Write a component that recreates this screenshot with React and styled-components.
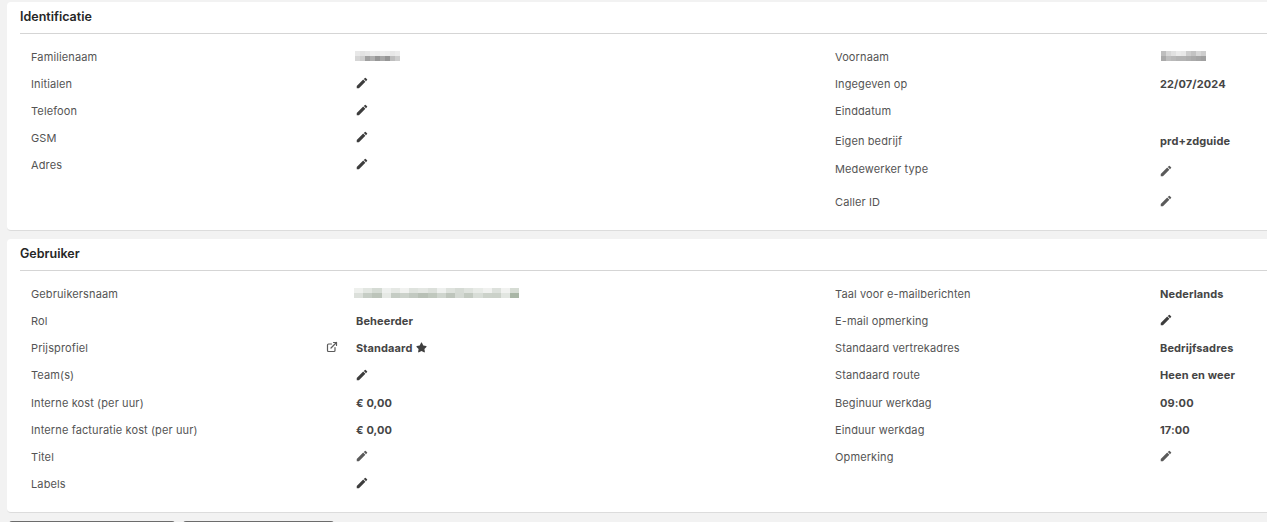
import React from 'react';
import styled, { createGlobalStyle } from 'styled-components';
import { MdEdit } from 'react-icons/md';
import { FaStar } from 'react-icons/fa';
import { ExternalLink } from 'lucide-react';

const GlobalStyle = createGlobalStyle`
    html, body {
        margin: 0;
        padding: 0;
        height: 100%;
        overflow: hidden;
        background: #f2f2f2;
        font-family: Inter, "Liberation Sans", sans-serif;
    }
`;

const Page = styled.div`
    height: 522px;
    padding: 2px 0 0 7px;
    box-sizing: border-box;
    overflow: hidden;
`;

const Card = styled.section`
    height: ${({ $height }) => $height}px;
    margin-bottom: 8px;
    padding-left: 13px;
    background: #fff;
    border-bottom: 1px solid #dcdcdc;
    border-radius: 4px 0 0 4px;
    box-sizing: border-box;
`;

const Title = styled.h2`
    height: 32px;
    margin: 0;
    padding-top: 7px;
    box-sizing: border-box;
    font-size: 12.5px;
    line-height: 16px;
    font-weight: 600;
    color: #262626;
    border-bottom: 1px solid #d5d5d5;
`;

const Body = styled.div`
    display: grid;
    grid-template-columns: 804px 1fr;
    padding: 9px 0 0 11px;
`;

const Row = styled.div`
    display: grid;
    grid-template-columns: 325px 1fr;
    align-items: center;
    height: ${({ $height }) => $height || 27}px;
    font-size: 11px;
    letter-spacing: 0.12px;
`;

const Label = styled.div`
    position: relative;
    color: #545454;
    line-height: 16px;
    top: ${({ $shift }) => $shift || 0}px;
`;

const Value = styled.div`
    display: flex;
    align-items: center;
    gap: 2px;
    font-weight: 700;
    color: #454545;
    line-height: 16px;
`;

const Pencil = styled(MdEdit)`
    width: 14px;
    height: 14px;
    margin: -1px 0 0 -1px;
    color: ${({ $light }) => ($light ? '#5a5a5a' : '#3d3d3d')};
`;

const LinkIcon = styled(ExternalLink)`
    position: absolute;
    right: 18px;
    top: 1px;
    width: 12px;
    height: 12px;
    color: #5c5c5c;
`;

const Star = styled(FaStar)`
    width: 11px;
    height: 11px;
    margin-left: 2px;
    color: #3f3f3f;
`;

const Mosaic = styled.div`
    display: grid;
    grid-template-columns: repeat(${({ $cols }) => $cols}, ${({ $size }) => $size}px);
    grid-auto-rows: 5px;
    margin: -2px 0 0 ${({ $left }) => $left || 0}px;
`;

const Cell = styled.span`
    background: ${({ $color }) => $color};
`;

const Actions = styled.div`
    display: flex;
    gap: 8px;
    padding-left: 2px;
`;

const ActionButton = styled.div`
    width: ${({ $width }) => $width}px;
    height: 8px;
    background: #6c6c6c;
    border-radius: 3px 3px 0 0;
`;

const shades = (tones) => tones.map((t) => `rgb(${t},${t},${t})`);

const blurLast = shades([
    232, 226, 230, 238, 236, 240, 238, 232, 236,
    214, 205, 160, 175, 150, 168, 150, 190, 205,
]);

const blurFirst = shades([
    190, 215, 225, 235, 232, 205, 195, 215, 205,
    170, 190, 185, 180, 180, 175, 170, 165, 160,
]);

const greens = [
    '#eef0ed', '#e2e6e1', '#d5dbd4', '#eef0ee', '#e5e8e4', '#f1f2f0', '#dfe3de', '#e4e7e3', '#dce0db', '#eef0ee', '#dee2dd', '#d6dbd5', '#dfe3de', '#e8ebe7', '#f0f1ef', '#dde1dc', '#f1f2f0', '#d6dcd4',
    '#dce0db', '#c6cdc5', '#bcc4ba', '#e6e9e5', '#c5ccc4', '#ccd2cb', '#c2c9c1', '#b8c0b6', '#c0c8be', '#cfd5ce', '#bec5bc', '#d4d9d3', '#c3cac1', '#d8ddd7', '#ccd2ca', '#cbd1c9', '#e2e6e1', '#a9b6a6',
];

const Blur = ({ colors, cols, size, left }) => (
    <Mosaic $cols={cols} $size={size} $left={left}>
        {colors.map((color, i) => <Cell key={i} $color={color} />)}
    </Mosaic>
);

const identLeft = [
    { label: 'Familienaam', value: <Blur colors={blurLast} cols={9} size={5} left={-1} /> },
    { label: 'Initialen', edit: true },
    { label: 'Telefoon', edit: true },
    { label: 'GSM', edit: true },
    { label: 'Adres', edit: true },
];

const identRight = [
    { label: 'Voornaam', value: <Blur colors={blurFirst} cols={9} size={5} left={1} /> },
    { label: 'Ingegeven op', value: '22/07/2024' },
    { label: 'Einddatum' },
    { label: 'Eigen bedrijf', value: 'prd+zdguide', height: 33 },
    { label: 'Medewerker type', edit: true, light: true, height: 29, shift: -3 },
    { label: 'Caller ID', edit: true, light: true, height: 31 },
];

const userLeft = [
    { label: 'Gebruikersnaam', value: <Blur colors={greens} cols={18} size={9.2} left={-2} /> },
    { label: 'Rol', value: 'Beheerder' },
    { label: 'Prijsprofiel', link: true, value: <>Standaard <Star /></> },
    { label: 'Team(s)', edit: true, height: 28 },
    { label: 'Interne kost (per uur)', value: '€ 0,00' },
    { label: 'Interne facturatie kost (per uur)', value: '€ 0,00' },
    { label: 'Titel', edit: true, light: true },
    { label: 'Labels', edit: true },
];

const userRight = [
    { label: 'Taal voor e-mailberichten', value: 'Nederlands' },
    { label: 'E-mail opmerking', edit: true },
    { label: 'Standaard vertrekadres', value: 'Bedrijfsadres' },
    { label: 'Standaard route', value: 'Heen en weer', height: 28 },
    { label: 'Beginuur werkdag', value: '09:00' },
    { label: 'Einduur werkdag', value: '17:00' },
    { label: 'Opmerking', edit: true, light: true },
];

const Field = ({ item }) => (
    <Row $height={item.height}>
        <Label $shift={item.shift}>
            {item.label}
            {item.link && <LinkIcon strokeWidth={2.4} />}
        </Label>
        <Value>
            {item.edit ? <Pencil $light={item.light} /> : item.value}
        </Value>
    </Row>
);

const Column = ({ items }) => (
    <div>
        {items.map((item) => <Field key={item.label} item={item} />)}
    </div>
);

export default function App() {
    return (
        <Page>
            <GlobalStyle />
            <Card $height={229}>
                <Title>Identificatie</Title>
                <Body>
                    <Column items={identLeft} />
                    <Column items={identRight} />
                </Body>
            </Card>
            <Card $height={274}>
                <Title>Gebruiker</Title>
                <Body>
                    <Column items={userLeft} />
                    <Column items={userRight} />
                </Body>
            </Card>
            <Actions>
                <ActionButton $width={166} />
                <ActionButton $width={151} />
            </Actions>
        </Page>
    );
}
